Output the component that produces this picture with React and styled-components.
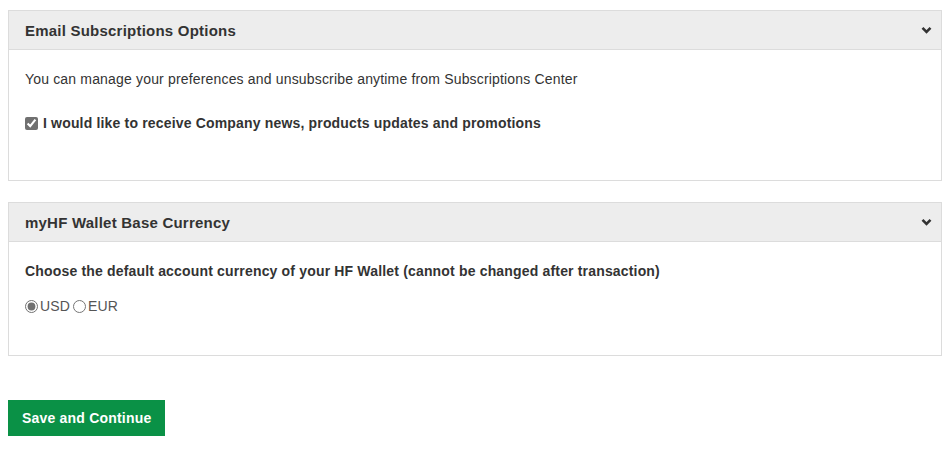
import React, { useState } from 'react'
import styled, { createGlobalStyle } from 'styled-components'

const Global = createGlobalStyle`
  body {
    margin: 8px;
    background: #fff;
    font-family: "Liberation Sans", Arial, sans-serif;
    color: #333;
  }
`;

const Page = styled.div`
  display: flex;
  flex-direction: column;
  gap: 21px;
  padding-top: 2px;
`;

const Panel = styled.section`
  border: 1px solid #dcdcdc;
  background: #fff;
`;

const Header = styled.div`
  display: flex;
  align-items: center;
  justify-content: space-between;
  height: 38px;
  padding: 0 9px 0 16px;
  background: #ededed;
  border-bottom: 1px solid #dcdcdc;
`;

const Title = styled.h3`
  margin: 0;
  font-size: 15px;
  font-weight: bold;
  letter-spacing: 0.22px;
  color: #333;
`;

const Body = styled.div`
  display: flex;
  flex-direction: column;
  gap: ${(p) => p.gap}px;
  padding: 19px 16px ${(p) => p.bottom}px;
  font-size: 14px;
  line-height: 20px;
  letter-spacing: 0.17px;
`;

const Text = styled.p`
  margin: 0;
  color: #333;
  font-weight: ${(p) => (p.bold ? 'bold' : 'normal')};
`;

const CheckLabel = styled.label`
  display: flex;
  align-items: center;
  gap: 5px;
  font-weight: bold;
  color: #333;
  input {
    margin: 0;
    width: 13px;
    height: 13px;
    accent-color: #707070;
  }
`;

const Radios = styled.div`
  display: flex;
  align-items: center;
  gap: 3px;
`;

const RadioLabel = styled.label`
  display: flex;
  align-items: center;
  gap: 2px;
  color: #555;
  input {
    margin: 0;
    width: 13px;
    height: 13px;
    accent-color: #707070;
  }
`;

const Button = styled.button`
  align-self: flex-start;
  margin-top: 23px;
  height: 36px;
  padding: 0 14px;
  border: none;
  background: #0a9146;
  color: #fff;
  font-family: "Liberation Sans", Arial, sans-serif;
  font-size: 14px;
  font-weight: bold;
  letter-spacing: 0.2px;
  cursor: pointer;
`;

const Chevron = () => (
  <svg width="11" height="8" viewBox="0 0 11 8">
    <path d="M1.5 1.8 L5.5 5.8 L9.5 1.8" fill="none" stroke="#333" strokeWidth="2.6" />
  </svg>
)

function App() {
  const [news, setNews] = useState(true)
  const [currency, setCurrency] = useState('USD')

  return (
    <Page>
      <Global />
      <Panel>
        <Header>
          <Title>Email Subscriptions Options</Title>
          <Chevron />
        </Header>
        <Body gap={24} bottom={47}>
          <Text>You can manage your preferences and unsubscribe anytime from Subscriptions Center</Text>
          <CheckLabel>
            <input type="checkbox" checked={news} onChange={() => setNews(!news)} />
            I would like to receive Company news, products updates and promotions
          </CheckLabel>
        </Body>
      </Panel>
      <Panel>
        <Header>
          <Title>myHF Wallet Base Currency</Title>
          <Chevron />
        </Header>
        <Body gap={15} bottom={39}>
          <Text bold>Choose the default account currency of your HF Wallet (cannot be changed after transaction)</Text>
          <Radios>
            {['USD', 'EUR'].map((c) => (
              <RadioLabel key={c}>
                <input type="radio" name="cur" checked={currency === c} onChange={() => setCurrency(c)} />
                {c}
              </RadioLabel>
            ))}
          </Radios>
        </Body>
      </Panel>
      <Button>Save and Continue</Button>
    </Page>
  )
}

export default App
